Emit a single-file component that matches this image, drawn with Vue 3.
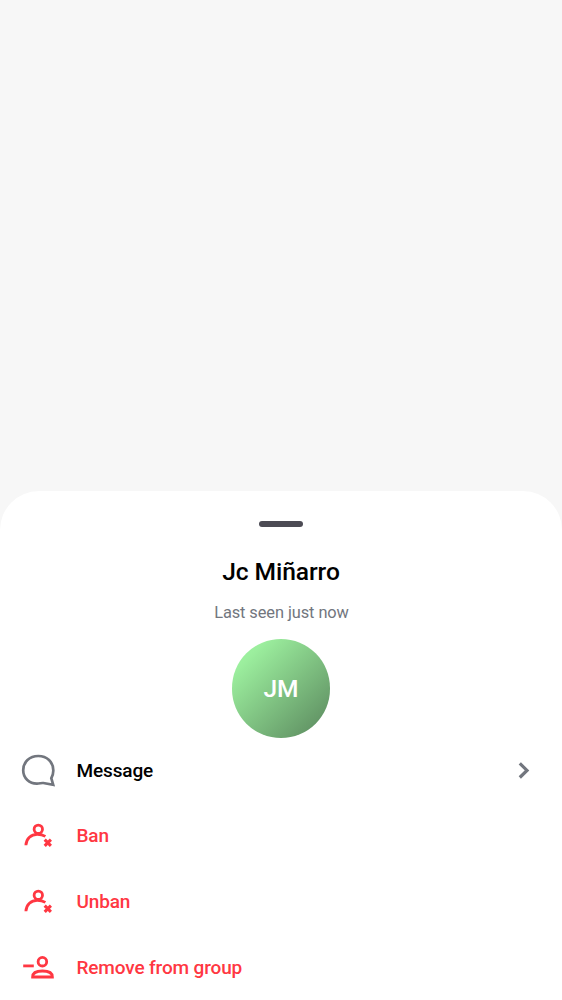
<script setup>
const actions = [
  { label: 'Message', icon: 'message' },
  { label: 'Ban', icon: 'ban', danger: true },
  { label: 'Unban', icon: 'ban', danger: true },
  { label: 'Remove from group', icon: 'remove', danger: true },
]
</script>

<template>
  <div class="screen">
    <section class="sheet">
      <div class="handle"></div>
      <h1 class="name">Jc Miñarro</h1>
      <p class="status">Last seen just now</p>
      <div class="avatar">JM</div>
      <ul class="actions">
        <li v-for="a in actions" :key="a.label" class="row" :class="{ danger: a.danger }">
          <svg v-if="a.icon === 'message'" class="icon" viewBox="0 -0.6 40 40">
            <path stroke-width="2.7" d="M35.2 34.2L33.3 27.6C34.7 25.2 35.4 22.5 35.3 19.7C35.2 11.2 29 5.4 20.3 5.4C11.5 5.4 5.2 11.5 5.2 19.6C5.2 27.6 11.5 33.1 19 33C21.8 33 23.2 32.2 25.3 32.4Z" />
          </svg>
          <svg v-else-if="a.icon === 'ban'" class="icon" viewBox="0 0 40 40">
            <circle cx="20.3" cy="13.3" r="4.2" />
            <path d="M7.9 29.3C8.2 22.5 13.2 18.4 19.2 18.4C22.3 18.4 25 19 27.4 20.4" />
            <path class="cross" d="M26.7 23.7L32.9 29.9M32.9 23.7L26.7 29.9" />
          </svg>
          <svg v-else class="icon" viewBox="0 -0.5 40 40">
            <path d="M5.2 18.4H15.8" />
            <circle cx="24.4" cy="14.2" r="4.3" />
            <path d="M14.6 29.5C14.6 25.5 18.3 23.5 24.5 23.5S34.4 25.5 34.4 29.5Z" />
          </svg>
          <span class="label">{{ a.label }}</span>
          <svg v-if="!a.danger" class="chevron" viewBox="0 0 14 20">
            <path d="M2.8 3.3L10 10.4L2.8 17.5" />
          </svg>
        </li>
      </ul>
    </section>
  </div>
</template>

<style>
body {
  background: #f7f7f7;
}
</style>

<style scoped>
.screen {
  height: 1000px;
  padding-top: 491px;
  box-sizing: border-box;
  overflow: hidden;
  background: #f7f7f7;
  font-family: Roboto, "Liberation Sans", sans-serif;
}
.sheet {
  height: 509px;
  box-sizing: border-box;
  padding-top: 30px;
  display: flex;
  flex-direction: column;
  align-items: center;
  background: #fff;
  border-radius: 39px 39px 0 0;
}
.handle {
  width: 44px;
  height: 6px;
  flex: none;
  border-radius: 3px;
  background: #4c4b54;
}
.name {
  margin: 30px 0 0;
  font-size: 24.6px;
  line-height: 30px;
  font-weight: 500;
  letter-spacing: -0.08px;
  color: #000;
}
.status {
  margin: 16px 0 0;
  padding-left: 1px;
  font-size: 16.4px;
  line-height: 20px;
  letter-spacing: -0.08px;
  color: #72767e;
}
.avatar {
  width: 98.4px;
  height: 98.4px;
  flex: none;
  margin-top: 16.2px;
  padding-top: 1px;
  box-sizing: border-box;
  display: flex;
  align-items: center;
  justify-content: center;
  border-radius: 50%;
  background: linear-gradient(135deg, #9cef9e 17%, #609163 91%);
  color: #fff;
  font-size: 24.6px;
  line-height: 30px;
  font-weight: 500;
}
.actions {
  align-self: stretch;
  margin: 0.1px 0 0;
  padding: 0;
  list-style: none;
}
.row {
  height: 65.6px;
  display: flex;
  align-items: center;
  padding: 0 31px 0 18px;
  box-sizing: border-box;
  color: #000;
}
.danger {
  color: #ff3742;
}
.icon,
.chevron {
  flex: none;
  fill: none;
  stroke: #72767e;
  stroke-width: 2.8;
}
.icon {
  width: 40px;
  height: 40px;
}
.danger .icon {
  stroke: #ff3742;
}
.cross {
  stroke-width: 3.1;
}
.label {
  flex: 1;
  margin-left: 18.5px;
  padding-top: 0.7px;
  font-size: 19px;
  line-height: 24px;
  font-weight: 500;
  letter-spacing: -0.14px;
}
.chevron {
  width: 14px;
  height: 20px;
  stroke-width: 3.2;
}
</style>
